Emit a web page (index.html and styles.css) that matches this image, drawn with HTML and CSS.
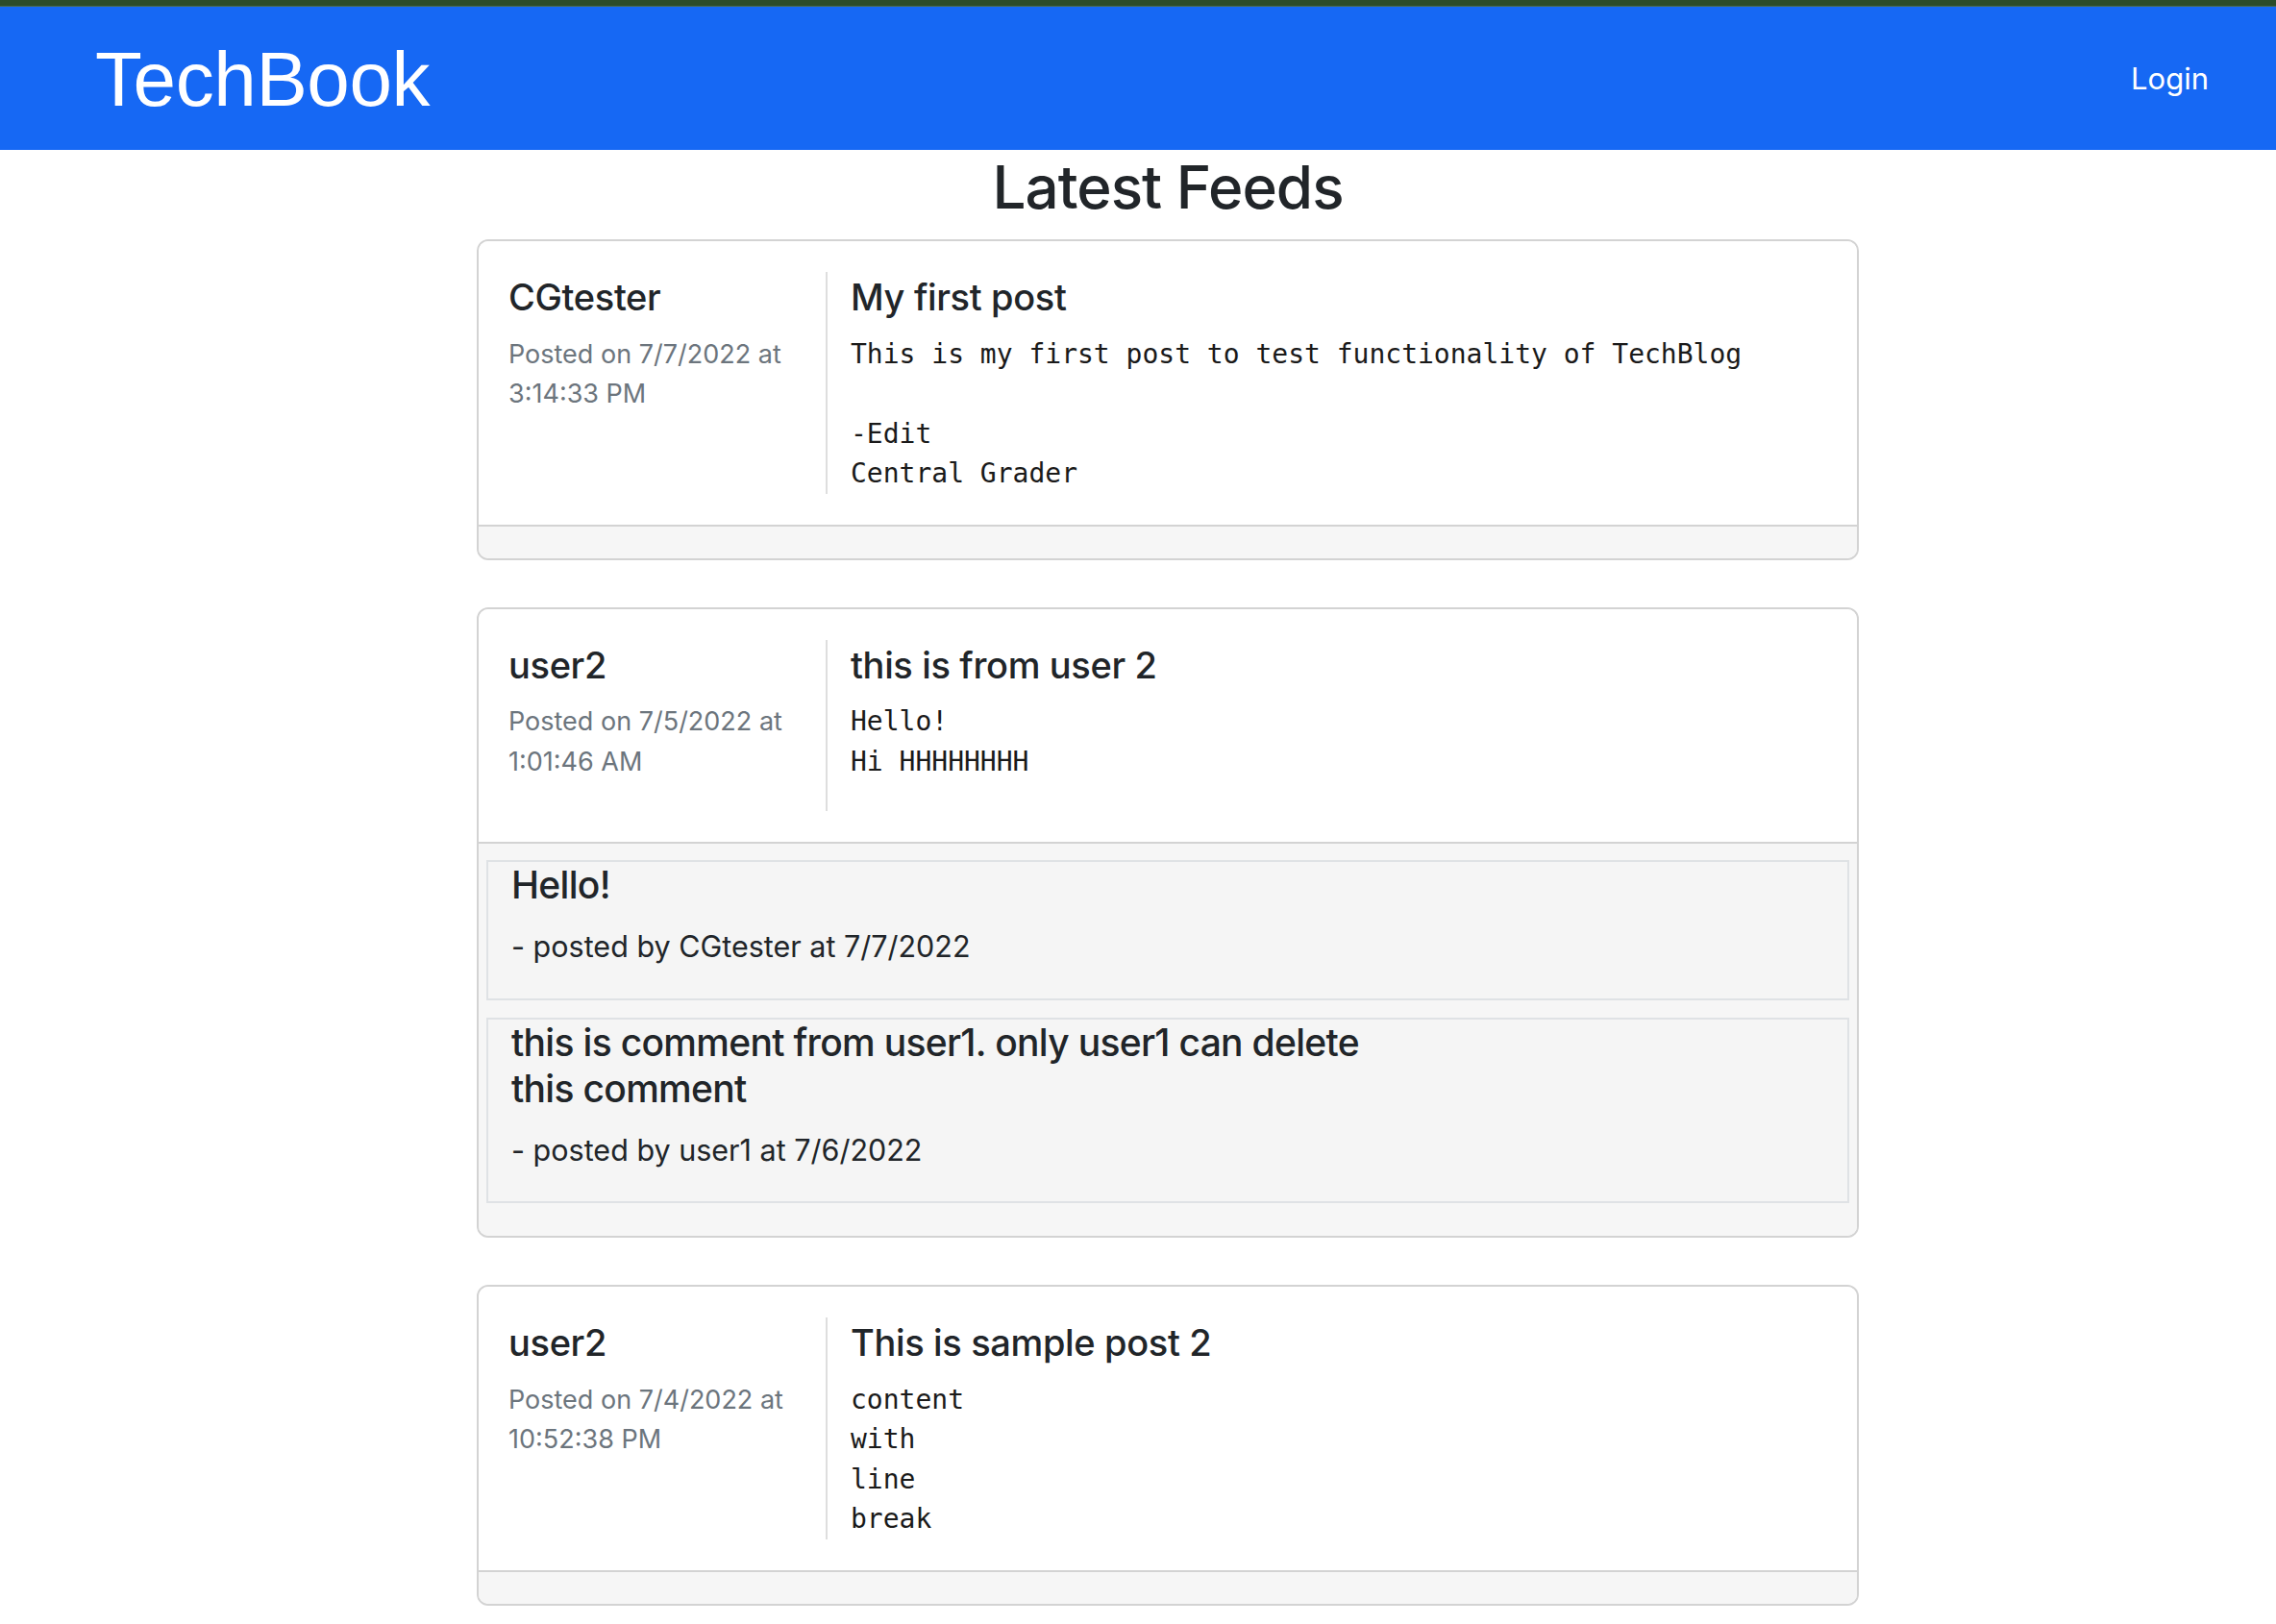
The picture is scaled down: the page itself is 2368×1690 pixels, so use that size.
FILE: index.html
```html
<!DOCTYPE html>
<html lang="en">
<head>
<meta charset="utf-8">
<title>TechBook</title>
<link rel="stylesheet" href="styles.css">
</head>
<body>
<div class="topline"></div>
<header class="navbar">
  <a class="brand" href="#">TechBook</a>
  <nav class="nav">
    <a class="nav-link" href="#">Login</a>
  </nav>
</header>
<main class="main">
  <div class="container">
    <h1 class="page-title">Latest Feeds</h1>

    <article class="post">
      <div class="post-body">
        <div class="post-meta">
          <h5 class="post-author">CGtester</h5>
          <p class="post-date">Posted on 7/7/2022 at 3:14:33 PM</p>
        </div>
        <div class="post-main">
          <h5 class="post-title">My first post</h5>
          <p class="post-text">This is my first post to test functionality of TechBlog

-Edit
Central Grader</p>
        </div>
      </div>
      <div class="post-footer"></div>
    </article>

    <article class="post">
      <div class="post-body">
        <div class="post-meta">
          <h5 class="post-author">user2</h5>
          <p class="post-date">Posted on 7/5/2022 at 1:01:46 AM</p>
        </div>
        <div class="post-main">
          <h5 class="post-title">this is from user 2</h5>
          <p class="post-text post-text--tail">Hello!
Hi HHHHHHHH</p>
        </div>
      </div>
      <div class="post-footer">
        <div class="comment">
          <h4 class="comment-text">Hello!</h4>
          <p class="comment-by">- posted by CGtester at 7/7/2022</p>
        </div>
        <div class="comment">
          <h4 class="comment-text">this is comment from user1. only user1 can delete this comment</h4>
          <p class="comment-by">- posted by user1 at 7/6/2022</p>
        </div>
      </div>
    </article>

    <article class="post">
      <div class="post-body">
        <div class="post-meta">
          <h5 class="post-author">user2</h5>
          <p class="post-date">Posted on 7/4/2022 at 10:52:38 PM</p>
        </div>
        <div class="post-main">
          <h5 class="post-title">This is sample post 2</h5>
          <p class="post-text">content
with
line
break</p>
        </div>
      </div>
      <div class="post-footer"></div>
    </article>
  </div>
</main>
</body>
</html>
```

FILE: styles.css
```css
* {
  box-sizing: border-box;
}

html, body {
  margin: 0;
  padding: 0;
  background: #ffffff;
}

body {
  font-family: Inter, "Noto Sans", "Liberation Sans", sans-serif;
  color: #212529;
  overflow: hidden;
}

.topline {
  height: 7px;
  background: #2c4c2a;
  border-bottom: 1px solid #4d6a4b;
}

.navbar {
  height: 149px;
  background: #1668f4;
  display: flex;
  align-items: center;
  justify-content: space-between;
  padding: 0 70px 0 99px;
}

.brand {
  font-family: "Liberation Sans", Arial, sans-serif;
  font-size: 80px;
  letter-spacing: -0.4px;
  color: #ffffff;
  text-decoration: none;
  line-height: 1;
  margin-top: 2px;
}

.nav-link {
  font-size: 31px;
  color: #ffffff;
  text-decoration: none;
  line-height: 1;
}

.main {
  padding-left: 62px;
}

.container {
  width: 1438px;
  margin: 0 auto;
}

.page-title {
  margin: 0 0 17px;
  padding-top: 2px;
  text-align: center;
  font-size: 62px;
  font-weight: 500;
  line-height: 1.2;
  letter-spacing: -1px;
}

.post {
  border: 2px solid #d3d3d3;
  border-radius: 12px;
  overflow: hidden;
  margin-bottom: 49px;
}

.post-body {
  display: flex;
  padding: 32px 31px 32px;
  background: #ffffff;
}

.post-meta {
  width: 330px;
  flex: none;
  padding-right: 10px;
}

.post-main {
  flex: 1;
  border-left: 2px solid #dedede;
  padding-left: 24px;
}

.post-author,
.post-title {
  margin: 0 0 12px;
  font-size: 38px;
  font-weight: 500;
  line-height: 52.5px;
  letter-spacing: -0.35px;
}

.post-date {
  margin: 0;
  font-size: 27px;
  line-height: 41.5px;
  color: #6c757d;
}

.post-text {
  margin: 0;
  font-family: "DejaVu Sans Mono", "Liberation Mono", monospace;
  font-size: 28px;
  line-height: 41.5px;
  white-space: pre-wrap;
  color: #1a1a1a;
}

.post-text--tail {
  padding-bottom: 31px;
}

.post-footer {
  min-height: 35px;
  background: #f6f6f6;
  border-top: 2px solid #d3d3d3;
  padding: 17px 8px 16px;
}

.comment {
  background: #f5f5f5;
  border: 2px solid #dfe2e5;
  padding: 0 24px;
  margin-bottom: 18px;
}

.comment-text {
  margin: 0 0 19px;
  max-width: 900px;
  font-size: 39px;
  font-weight: 500;
  line-height: 48px;
  letter-spacing: -0.7px;
}

.comment-by {
  margin: 0 0 33px;
  font-size: 30.5px;
  line-height: 41.5px;
}
```
